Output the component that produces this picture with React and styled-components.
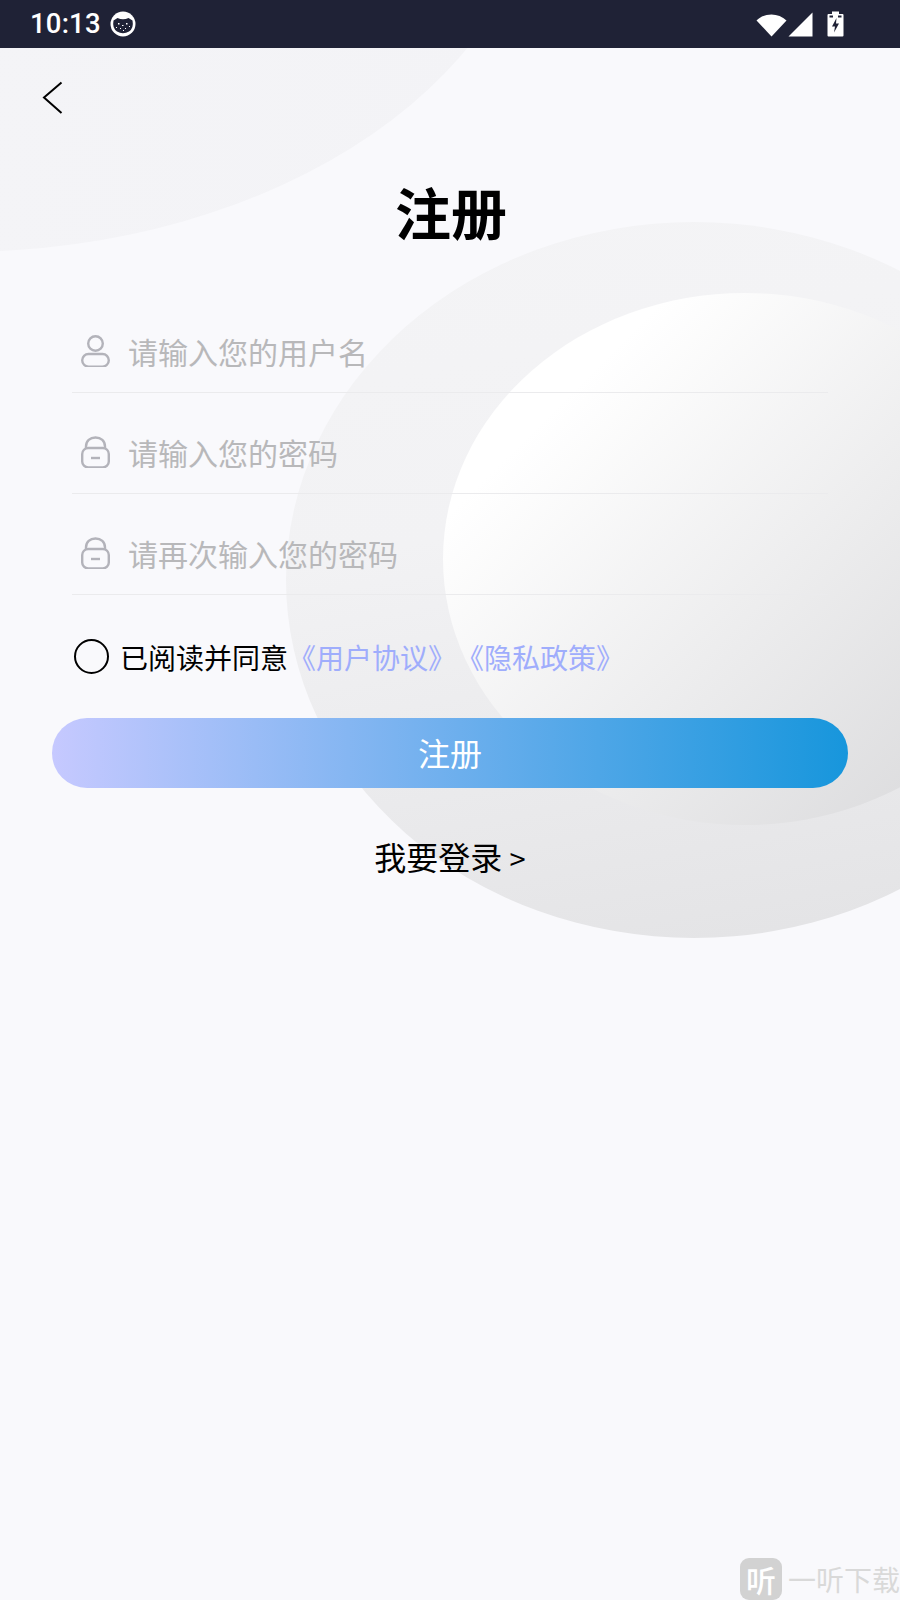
import React from 'react';
import styled, { createGlobalStyle } from 'styled-components';

const GlobalStyle = createGlobalStyle`
  html, body { margin: 0; padding: 0; background: #f9f9fc; }
  * { box-sizing: border-box; }
`;

const Screen = styled.div`
  position: relative;
  width: 900px;
  height: 1600px;
  overflow: hidden;
  background: #f9f9fc;
  font-family: "Noto Sans CJK SC", "Noto Sans", sans-serif;
  color: #000;
`;

// big soft ellipses behind the form
const Blob = styled.div`
  position: absolute;
  left: ${p => p.$cx - p.$rx}px;
  top: ${p => p.$cy - p.$ry}px;
  width: ${p => p.$rx * 2}px;
  height: ${p => p.$ry * 2}px;
  border-radius: 50%;
  background: ${p => p.$bg};
`;

const StatusBar = styled.div`
  position: relative;
  height: 48px;
  background: #1f2236;
  display: flex;
  align-items: center;
  padding: 0 56px 0 30px;
  color: #fff;
`;

const Time = styled.span`
  font-family: Roboto, sans-serif;
  font-weight: 500;
  font-size: 27.5px;
  line-height: 48px;
  letter-spacing: 0.2px;
  margin-right: 9px;
`;

const StatusRight = styled.div`
  margin-left: auto;
  display: flex;
  align-items: center;
`;

const Content = styled.div`
  position: relative;
  display: flex;
  flex-direction: column;
`;

const BackButton = styled.button`
  align-self: flex-start;
  border: 0;
  background: none;
  padding: 0;
  margin: 33px 0 0 42px;
  width: 22px;
  height: 34px;
  display: block;
`;

const Title = styled.h1`
  margin: 56px 0 0;
  padding-left: 2px;
  text-align: center;
  font-size: 56px;
  line-height: 80px;
  font-weight: 700;
`;

const Form = styled.form`
  margin: 0;
  padding: 0 72px;
  display: flex;
  flex-direction: column;
`;

const Fields = styled.div`
  margin-top: 41px;
  display: flex;
  flex-direction: column;
`;

const FieldRow = styled.label`
  height: 101px;
  display: flex;
  align-items: center;
  padding: 17px 0 0 9px;
  border-bottom: 1px solid #ebebed;
`;

const FieldInput = styled.input`
  flex: 1;
  margin-left: 18px;
  border: 0;
  padding: 0;
  outline: 0;
  background: transparent;
  font-family: inherit;
  font-size: 30px;
  line-height: 44px;
  height: 44px;
  color: #333;
  &::placeholder { color: #b8b8ba; opacity: 1; }
`;

const Agree = styled.div`
  margin-top: 44px;
  display: flex;
  align-items: center;
  height: 36px;
  font-size: 28px;
  line-height: 36px;
`;

const Radio = styled.span`
  width: 35px;
  height: 35px;
  margin: -2px 11px 0 2px;
  border: 2px solid #000;
  border-radius: 50%;
  flex: none;
`;

const AgreeLink = styled.a`
  color: #9fadfc;
  white-space: nowrap;
`;

const SubmitButton = styled.button`
  margin: 43px 0 0 -20px;
  width: 796px;
  height: 70px;
  border: 0;
  border-radius: 35px;
  padding: 0 0 3px;
  background: linear-gradient(90deg, #c6c9ff 0%, #1796dc 100%);
  color: #fff;
  font-family: inherit;
  font-size: 32px;
  line-height: 44px;
`;

const LoginLink = styled.a`
  margin: 45px 0 0 -20px;
  width: 796px;
  text-align: center;
  font-size: 32px;
  line-height: 46px;
`;

const LoginArrow = styled.span`
  font-size: 29px;
`;

const Watermark = styled.div`
  position: absolute;
  right: 0;
  bottom: 0;
  display: flex;
  align-items: center;
  height: 42px;
  color: #d9d9d9;
  font-size: 28px;
  white-space: nowrap;
`;

const WatermarkBadge = styled.span`
  width: 42px;
  height: 42px;
  margin-right: 6px;
  border-radius: 9px;
  background: #d2d2d2;
  color: #fff;
  font-size: 30px;
  font-weight: 500;
  line-height: 42px;
  text-align: center;
`;

const UserIcon = () => (
  <svg width="29" height="32" viewBox="0 0 29 32" fill="none" stroke="#b3b3ba" strokeWidth="2.4">
    <circle cx="14.5" cy="8.5" r="7.3" />
    <rect x="1.2" y="19" width="26.6" height="12.6" rx="6.3" />
  </svg>
);

const LockIcon = () => (
  <svg width="29" height="32" viewBox="0 0 29 32" fill="none" stroke="#b3b3ba" strokeWidth="2.4">
    <path d="M5 12V10.5C5 5 9 1.5 14.5 1.5S24 5 24 10.5V12" />
    <rect x="1.2" y="12" width="26.6" height="19.4" rx="6" />
    <path d="M10 22h9" />
  </svg>
);

const CatIcon = () => (
  <svg width="26" height="26" viewBox="0 0 26 26">
    <circle cx="13" cy="13" r="12.5" fill="#fff" />
    <path d="M3.5 9.5 L7.5 7 Q13 9.5 18.5 7 L22.5 9.5 Q24 17 19 20.5 Q13 24 7 20.5 Q2 17 3.5 9.5Z" fill="#1f2236" />
    <g fill="#fff">
      <rect x="8" y="12" width="1.5" height="1.5" />
      <rect x="16" y="12" width="1.5" height="1.5" />
      <rect x="12" y="14" width="1.5" height="1" />
      <rect x="10" y="17" width="1" height="1" />
      <rect x="15" y="17" width="1" height="1" />
      <rect x="6" y="16" width="1" height="1" />
      <rect x="19" y="15" width="1" height="1" />
      <rect x="13" y="19" width="1" height="1" />
    </g>
  </svg>
);

const WifiIcon = () => (
  <svg width="31" height="25" viewBox="0 0 31 25" style={{ marginRight: 1 }}>
    <path d="M0.5 8.5 C8.5 0.5 22.5 0.5 30.5 8.5 L15.5 24.5Z" fill="#fff" />
  </svg>
);

const SignalIcon = () => (
  <svg width="25" height="25" viewBox="0 0 25 25" style={{ marginRight: 14 }}>
    <path d="M24.5 0.5 V24.5 H0.5Z" fill="#fff" />
  </svg>
);

const BatteryIcon = () => (
  <svg width="17" height="26" viewBox="0 0 17 26">
    <path d="M5 0.5h7v2.5h3.5a1 1 0 0 1 1 1V24.5a1 1 0 0 1-1 1H1.5a1 1 0 0 1-1-1V4a1 1 0 0 1 1-1H5Z" fill="#fff" />
    <path d="M2.5 4.5h3.5v2h-3.5ZM11 4.5h3.5v2H11Z" fill="#1f2236" />
    <path d="M9.5 7 L5 15.5 H8 L7 21.5 L12 12.5 H9Z" fill="#1f2236" />
  </svg>
);

const fields = [
  { icon: <UserIcon />, placeholder: '请输入您的用户名', type: 'text' },
  { icon: <LockIcon />, placeholder: '请输入您的密码', type: 'password' },
  { icon: <LockIcon />, placeholder: '请再次输入您的密码', type: 'password' },
];

export default function App() {
  return (
    <Screen>
      <GlobalStyle />
      <Blob $cx={-40} $cy={-150} $rx={583} $ry={402} $bg="linear-gradient(90deg, #f8f8fb 5%, #f4f4f7 50%, #f3f3f6 100%)" />
      <Blob $cx={694} $cy={580} $rx={408} $ry={358} $bg="linear-gradient(170deg, #f4f4f6 0%, #f2f2f4 40%, #e2e2e4 100%)" />
      <Blob $cx={745} $cy={559} $rx={302} $ry={266} $bg="linear-gradient(135deg, #ffffff 20%, #dadadc 92%)" />

      <StatusBar>
        <Time>10:13</Time>
        <CatIcon />
        <StatusRight>
          <WifiIcon />
          <SignalIcon />
          <BatteryIcon />
        </StatusRight>
      </StatusBar>

      <Content>
        <BackButton aria-label="back">
          <svg width="22" height="34" viewBox="0 0 22 34" fill="none" stroke="#000" strokeWidth="2">
            <path d="M19.5 1.5 L2 16.5 L19.5 32" />
          </svg>
        </BackButton>
        <Title>注册</Title>
        <Form>
          <Fields>
            {fields.map(f => (
              <FieldRow key={f.placeholder}>
                {f.icon}
                <FieldInput type={f.type} placeholder={f.placeholder} />
              </FieldRow>
            ))}
          </Fields>
          <Agree>
            <Radio />
            已阅读并同意
            <AgreeLink>《用户协议》</AgreeLink>
            <AgreeLink>《隐私政策》</AgreeLink>
          </Agree>
          <SubmitButton type="button">注册</SubmitButton>
          <LoginLink>我要登录 <LoginArrow>&gt;</LoginArrow></LoginLink>
        </Form>
      </Content>

      <Watermark>
        <WatermarkBadge>听</WatermarkBadge>
        一听下载
      </Watermark>
    </Screen>
  );
}
